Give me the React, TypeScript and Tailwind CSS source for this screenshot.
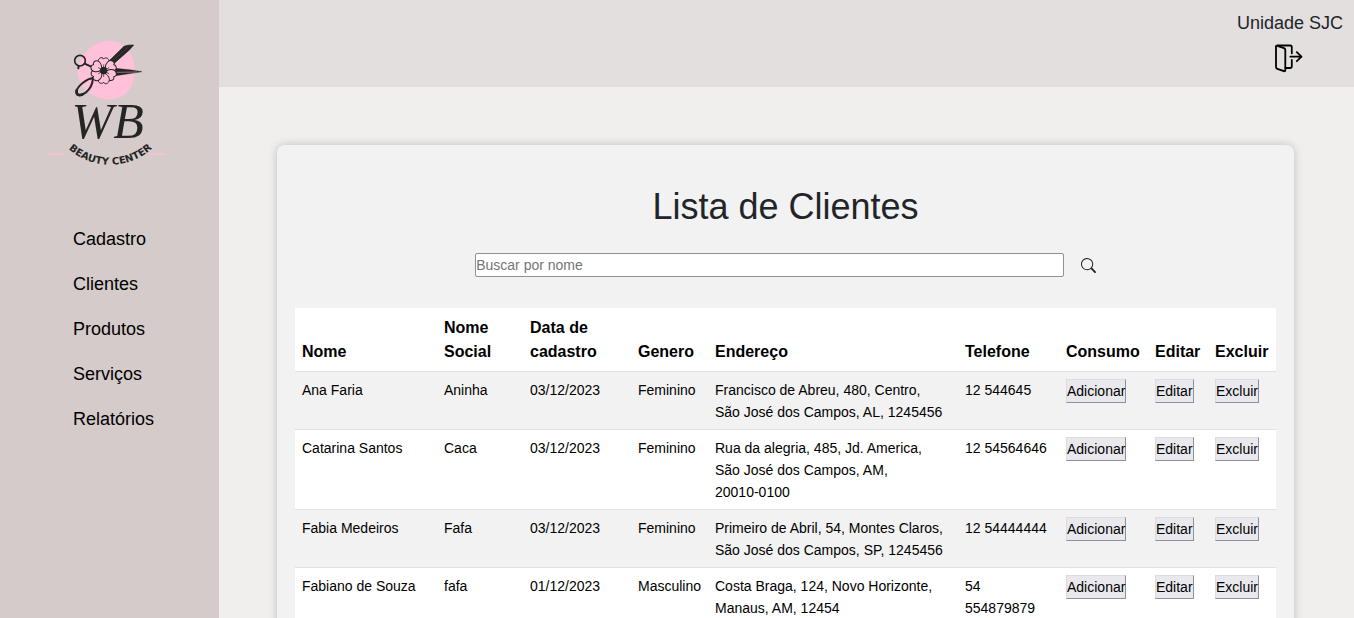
import { BsSearch } from "react-icons/bs";

interface ICliente {
  nome: string;
  nomeSocial: string;
  dataCadastro: string;
  genero: string;
  endereco: string;
  cep: string;
  telefone: string;
}

const clientes: ICliente[] = [
  {
    nome: "Ana Faria",
    nomeSocial: "Aninha",
    dataCadastro: "03/12/2023",
    genero: "Feminino",
    endereco: "Francisco de Abreu, 480, Centro, São José dos Campos, AL",
    cep: "1245456",
    telefone: "12 544645",
  },
  {
    nome: "Catarina Santos",
    nomeSocial: "Caca",
    dataCadastro: "03/12/2023",
    genero: "Feminino",
    endereco: "Rua da alegria, 485, Jd. America, São José dos Campos, AM",
    cep: "20010-0100",
    telefone: "12 54564646",
  },
  {
    nome: "Fabia Medeiros",
    nomeSocial: "Fafa",
    dataCadastro: "03/12/2023",
    genero: "Feminino",
    endereco: "Primeiro de Abril, 54, Montes Claros, São José dos Campos, SP",
    cep: "1245456",
    telefone: "12 54444444",
  },
  {
    nome: "Fabiano de Souza",
    nomeSocial: "fafa",
    dataCadastro: "01/12/2023",
    genero: "Masculino",
    endereco: "Costa Braga, 124, Novo Horizonte, Manaus, AM",
    cep: "12454",
    telefone: "54 554879879",
  },
];

const menu = ["Cadastro", "Clientes", "Produtos", "Serviços", "Relatórios"];

const petals = [0, 60, 120, 180, 240, 300];

const Logo: React.FC = () => {
  return (
    <svg
      className="w-[118px] h-[132px]"
      viewBox="24 30 354 396"
      fill="none"
      role="img"
      aria-label="WB Beauty Center"
    >
      <path
        d="M208 32C252 33 281 66 283 112C285 158 268 205 214 208C160 210 120 178 113 132C108 84 156 32 208 32Z"
        fill="#ffc0d9"
      />
      {/* scissors */}
      <g stroke="#252525" strokeLinecap="round" strokeLinejoin="round">
        <path d="M204 96L252 49Q264 44 281 45L268 60L218 104Z" fill="#252525" strokeWidth="2" />
        <path d="M211 98L264 52" stroke="#777" strokeWidth="1" />
        <path d="M228 115L276 120L306 125L276 130L228 137Z" fill="#252525" strokeWidth="1" />
        <path d="M230 127L290 126" stroke="#c995a9" strokeWidth="2" />
        <circle cx="120" cy="92" r="16" strokeWidth="5" />
        <path d="M134 101L160 113M116 108L115 115" strokeWidth="6" />
        <path
          d="M160 144C140 146 114 166 109 184C108 199 123 198 137 188C153 175 158 159 159 145"
          strokeWidth="6"
        />
        <path d="M110 181C108 197 119 197 128 193" strokeWidth="8" />
      </g>
      {/* flower */}
      <g stroke="#252525" strokeWidth="3" strokeLinejoin="round">
        {petals.map((angle) => (
          <g key={angle} transform={`rotate(${angle} 191 122)`}>
            <path
              d="M187 114C173 106 170 91 179 85C184 81 189 83 191 87C196 81 205 84 207 91C210 101 201 109 195 114Z"
              fill="#ffc0d9"
            />
            <path d="M191 114V103" strokeWidth="2" />
          </g>
        ))}
        <circle cx="191" cy="122" r="10" fill="#252525" />
      </g>
      <text
        x="203"
        y="324"
        textAnchor="middle"
        fontFamily="'Liberation Serif', serif"
        fontStyle="italic"
        fontSize="150"
        fill="#252525"
      >
        WB
      </text>
      <path id="arco" d="M72 344A189 189 0 0 0 350 342" />
      <text
        textAnchor="middle"
        fontFamily="'DejaVu Sans', sans-serif"
        fontWeight="bold"
        fontSize="30"
        fill="#252525"
      >
        <textPath href="#arco" startOffset="50%">
          BEAUTY CENTER
        </textPath>
      </text>
      <path d="M24 372H74M328 372H378" stroke="#ffc0d9" strokeWidth="5" />
    </svg>
  );
};

const DoorIcon: React.FC = () => {
  return (
    <svg
      className="w-[30px] h-[30px]"
      viewBox="1 0 30 30"
      fill="none"
      stroke="#000"
      strokeWidth="1.8"
      strokeLinecap="round"
      strokeLinejoin="round"
    >
      <path d="M2 3.6V24Q2 25.4 3.3 25.8L10 28.2Q11.3 28.6 11.3 27.2V7Q11.3 5.6 10 5.1L3.5 2.8" />
      <path d="M2 3.8Q2 2.5 3.4 2.5H16.3Q17.8 2.5 17.8 4V10.3M17.8 17V23.5Q17.8 25 16.3 25H11.5" />
      <path d="M16.3 13.7H27.5M22.8 9.2L27.5 13.7L22.8 18.2" />
    </svg>
  );
};

const Sidebar: React.FC = () => {
  return (
    <aside className="w-[219px] shrink-0 bg-[#d5cbca] pt-10">
      <div className="pl-12">
        <Logo />
      </div>
      <nav className="mt-[45px] flex flex-col pl-[73px]">
        {menu.map((item) => (
          <a key={item} href="#" className="text-lg leading-[45px] text-black">
            {item}
          </a>
        ))}
      </nav>
    </aside>
  );
};

const TableButton: React.FC<{ label: string }> = ({ label }) => {
  return (
    <button className="block border border-t-[#dcdce0] border-l-[#dcdce0] border-r-[#8f8f9d] border-b-[#8f8f9d] bg-[#e9e9ed] leading-[22px]">
      {label}
    </button>
  );
};

const ClienteRow: React.FC<ICliente> = ({
  nome,
  nomeSocial,
  dataCadastro,
  genero,
  endereco,
  cep,
  telefone,
}) => {
  return (
    <tr className="border-b border-[#dee2e6] align-top odd:bg-[#f2f2f2] even:bg-white *:px-[7px] *:pt-[7px] *:pb-[6px]">
      <td>{nome}</td>
      <td>{nomeSocial}</td>
      <td>{dataCadastro}</td>
      <td>{genero}</td>
      <td>
        <p className="pr-1">
          {endereco}, <span className="whitespace-nowrap">{cep}</span>
        </p>
      </td>
      <td>{telefone}</td>
      <td>
        <TableButton label="Adicionar" />
      </td>
      <td>
        <TableButton label="Editar" />
      </td>
      <td>
        <TableButton label="Excluir" />
      </td>
    </tr>
  );
};

const App: React.FC = () => {
  return (
    <div className="flex h-screen bg-[#f0efed] font-['Liberation_Sans',Arial,sans-serif]">
      <Sidebar />
      <div className="flex min-w-0 flex-1 flex-col">
        <header className="flex h-[87px] shrink-0 justify-end bg-[#e3dfde] pt-2 pr-[11px]">
          <div className="flex flex-col items-center">
            <p className="text-lg leading-[30px] text-[#212529]">Unidade SJC</p>
            <button className="mt-[5px]" aria-label="Sair">
              <DoorIcon />
            </button>
          </div>
        </header>
        <main className="flex-1 overflow-y-auto pt-[58px] pr-[60px] pl-[58px] [scrollbar-width:none]">
          <section className="rounded-lg bg-[#f2f2f2] px-[18px] pt-10 pb-8 shadow-[0_0_10px_rgba(0,0,0,0.2)]">
            <h1 className="text-center text-4xl leading-[44px] text-[#212529]">
              Lista de Clientes
            </h1>
            <form className="mt-6 flex items-center justify-center gap-[17px]">
              <input
                type="text"
                placeholder="Buscar por nome"
                aria-label="Buscar por nome"
                className="h-6 w-3/5 rounded-xs border border-[#8f8f9d] bg-white text-sm placeholder:text-[#757575]"
              />
              <button type="button" aria-label="Buscar">
                <BsSearch className="size-[15px] text-[#212529]" />
              </button>
            </form>
            <table className="mt-[31px] w-full table-fixed border-collapse text-left text-sm leading-[22px] text-black">
              <thead>
                <tr className="border-b border-[#dee2e6] bg-white align-bottom text-base leading-6 *:px-[7px] *:pt-2 *:pb-[7px]">
                  <th className="w-[142px]">Nome</th>
                  <th className="w-[86px]">Nome Social</th>
                  <th className="w-[108px]">Data de cadastro</th>
                  <th className="w-[77px]">Genero</th>
                  <th className="w-[250px]">Endereço</th>
                  <th className="w-[101px]">Telefone</th>
                  <th className="w-[89px]">Consumo</th>
                  <th className="w-[60px]">Editar</th>
                  <th className="w-[68px]">Excluir</th>
                </tr>
              </thead>
              <tbody>
                {clientes.map((cliente) => (
                  <ClienteRow key={cliente.nome} {...cliente} />
                ))}
              </tbody>
            </table>
          </section>
        </main>
      </div>
    </div>
  );
};

export default App;
